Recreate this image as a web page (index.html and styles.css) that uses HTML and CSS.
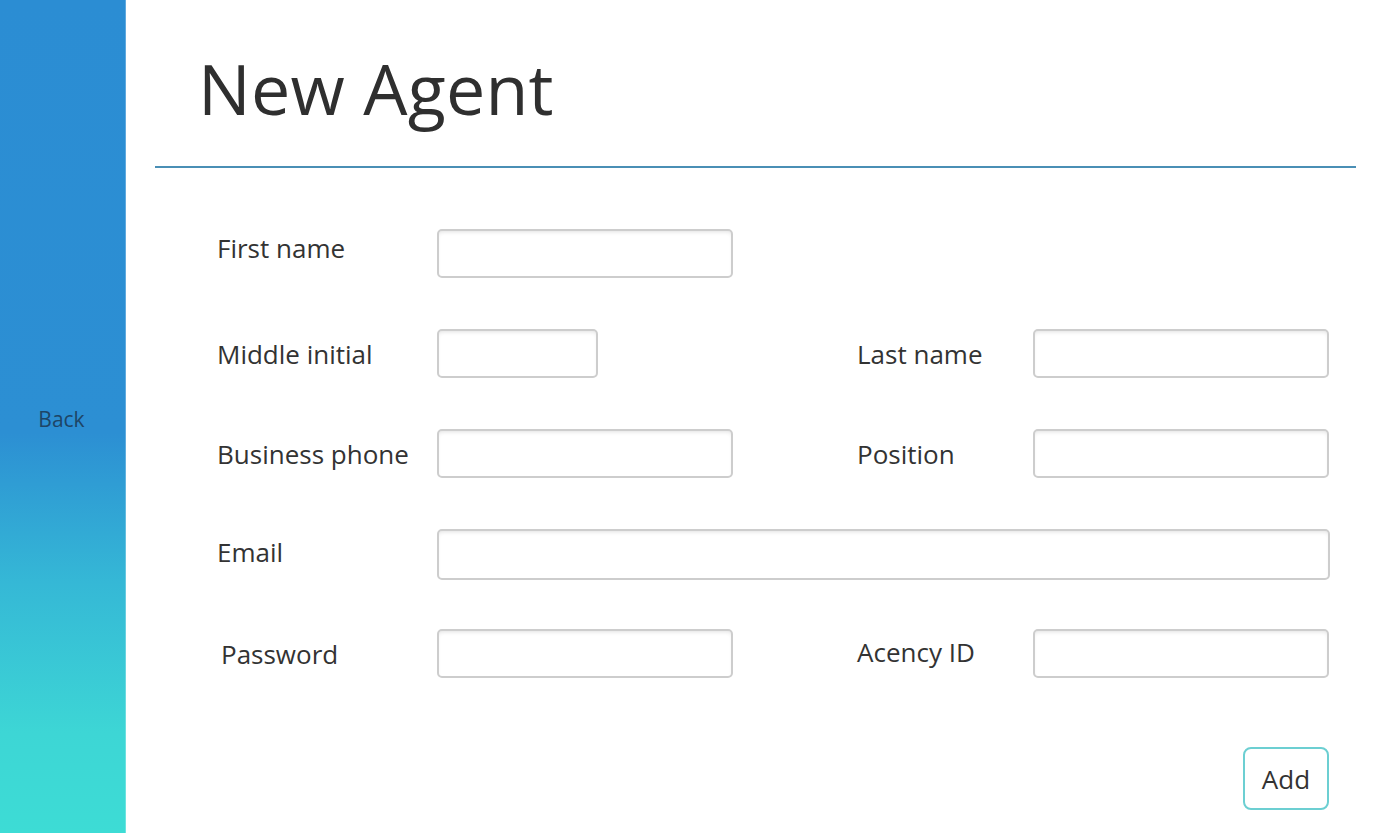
FILE: index.html
```html
<!DOCTYPE html>
<html lang="en">
<head>
<meta charset="utf-8">
<title>New Agent</title>
<link rel="stylesheet" href="styles.css">
</head>
<body>
<div class="app">
  <aside class="sidebar">
    <a class="back" href="#">Back</a>
  </aside>
  <main class="main">
    <header class="header">
      <h1 class="title">New Agent</h1>
    </header>
    <form class="form">
      <div class="grid">
        <label class="label label-first">First name</label>
        <input class="field" type="text">
        <span class="spacer"></span>
        <span class="spacer"></span>
        <span class="spacer"></span>

        <label class="label">Middle initial</label>
        <input class="field field-short" type="text">
        <span class="spacer"></span>
        <label class="label">Last name</label>
        <input class="field" type="text">

        <label class="label">Business phone</label>
        <input class="field" type="text">
        <span class="spacer"></span>
        <label class="label">Position</label>
        <input class="field" type="text">

        <label class="label label-email">Email</label>
        <input class="field field-wide" type="text">

        <label class="label label-pass">Password</label>
        <input class="field" type="password">
        <span class="spacer"></span>
        <label class="label label-agency">Acency ID</label>
        <input class="field" type="text">
      </div>
      <div class="actions">
        <button class="add" type="button">Add</button>
      </div>
    </form>
  </main>
</div>
</body>
</html>
```

FILE: styles.css
```css
html, body {
  margin: 0;
  padding: 0;
  height: 100%;
  overflow: hidden;
  background: #ffffff;
}

body {
  font-family: "Open Sans", "Noto Sans", "Liberation Sans", sans-serif;
  color: #333333;
}

.app {
  display: flex;
  height: 833px;
}

.sidebar {
  width: 126px;
  flex: 0 0 126px;
  background: linear-gradient(to bottom, #2b8dd3 0%, #2c8fd3 52%, #35b8d6 70%, #3dd6d5 88%, #3ddcd5 100%);
  display: flex;
  align-items: center;
  justify-content: center;
  box-shadow: inset -1px 0 0 rgba(255,255,255,0.25);
}

.back {
  font-size: 21px;
  color: #1e4566;
  text-decoration: none;
  margin-top: 4px;
  margin-left: -3px;
}

.main {
  flex: 1;
  display: flex;
  flex-direction: column;
}

.header {
  margin: 0 32px 0 29px;
  padding: 54px 0 44px 43px;
  border-bottom: 2px solid #4a8fb5;
}

.title {
  margin: 0;
  font-size: 70px;
  font-weight: 400;
  line-height: 68px;
  color: #2f2f2f;
  letter-spacing: 0.2px;
}

.form {
  padding: 61px 0 0 91px;
  width: 1112px;
}

.grid {
  display: grid;
  grid-template-columns: 220px 296px 124px 176px 296px;
  grid-auto-rows: 100px;
  align-items: start;
}

.label {
  font-size: 26px;
  line-height: 51px;
  color: #333333;
  white-space: nowrap;
}

.label-first {
  line-height: 39px;
}

.label-email {
  line-height: 47px;
}

.label-pass {
  padding-left: 4px;
  line-height: 51px;
}

.label-agency {
  line-height: 47px;
}

.field {
  box-sizing: border-box;
  width: 296px;
  height: 49px;
  margin: 0;
  border: 2px solid #cdcdcd;
  border-radius: 5px;
  background: #ffffff;
  box-shadow: inset 0 3px 4px -2px rgba(0, 0, 0, 0.12);
  font-family: inherit;
  font-size: 20px;
  padding: 0 10px;
  outline: none;
}

.field-short {
  width: 161px;
}

.field-wide {
  grid-column: 2 / 6;
  width: 893px;
  height: 51px;
}

.actions {
  display: flex;
  justify-content: flex-end;
  padding-top: 18px;
}

.add {
  box-sizing: border-box;
  width: 86px;
  height: 63px;
  border: 2px solid #6ccfd2;
  border-radius: 8px;
  background: #ffffff;
  font-family: inherit;
  font-size: 26px;
  color: #333333;
  padding: 0;
  margin-right: 0;
}
```
